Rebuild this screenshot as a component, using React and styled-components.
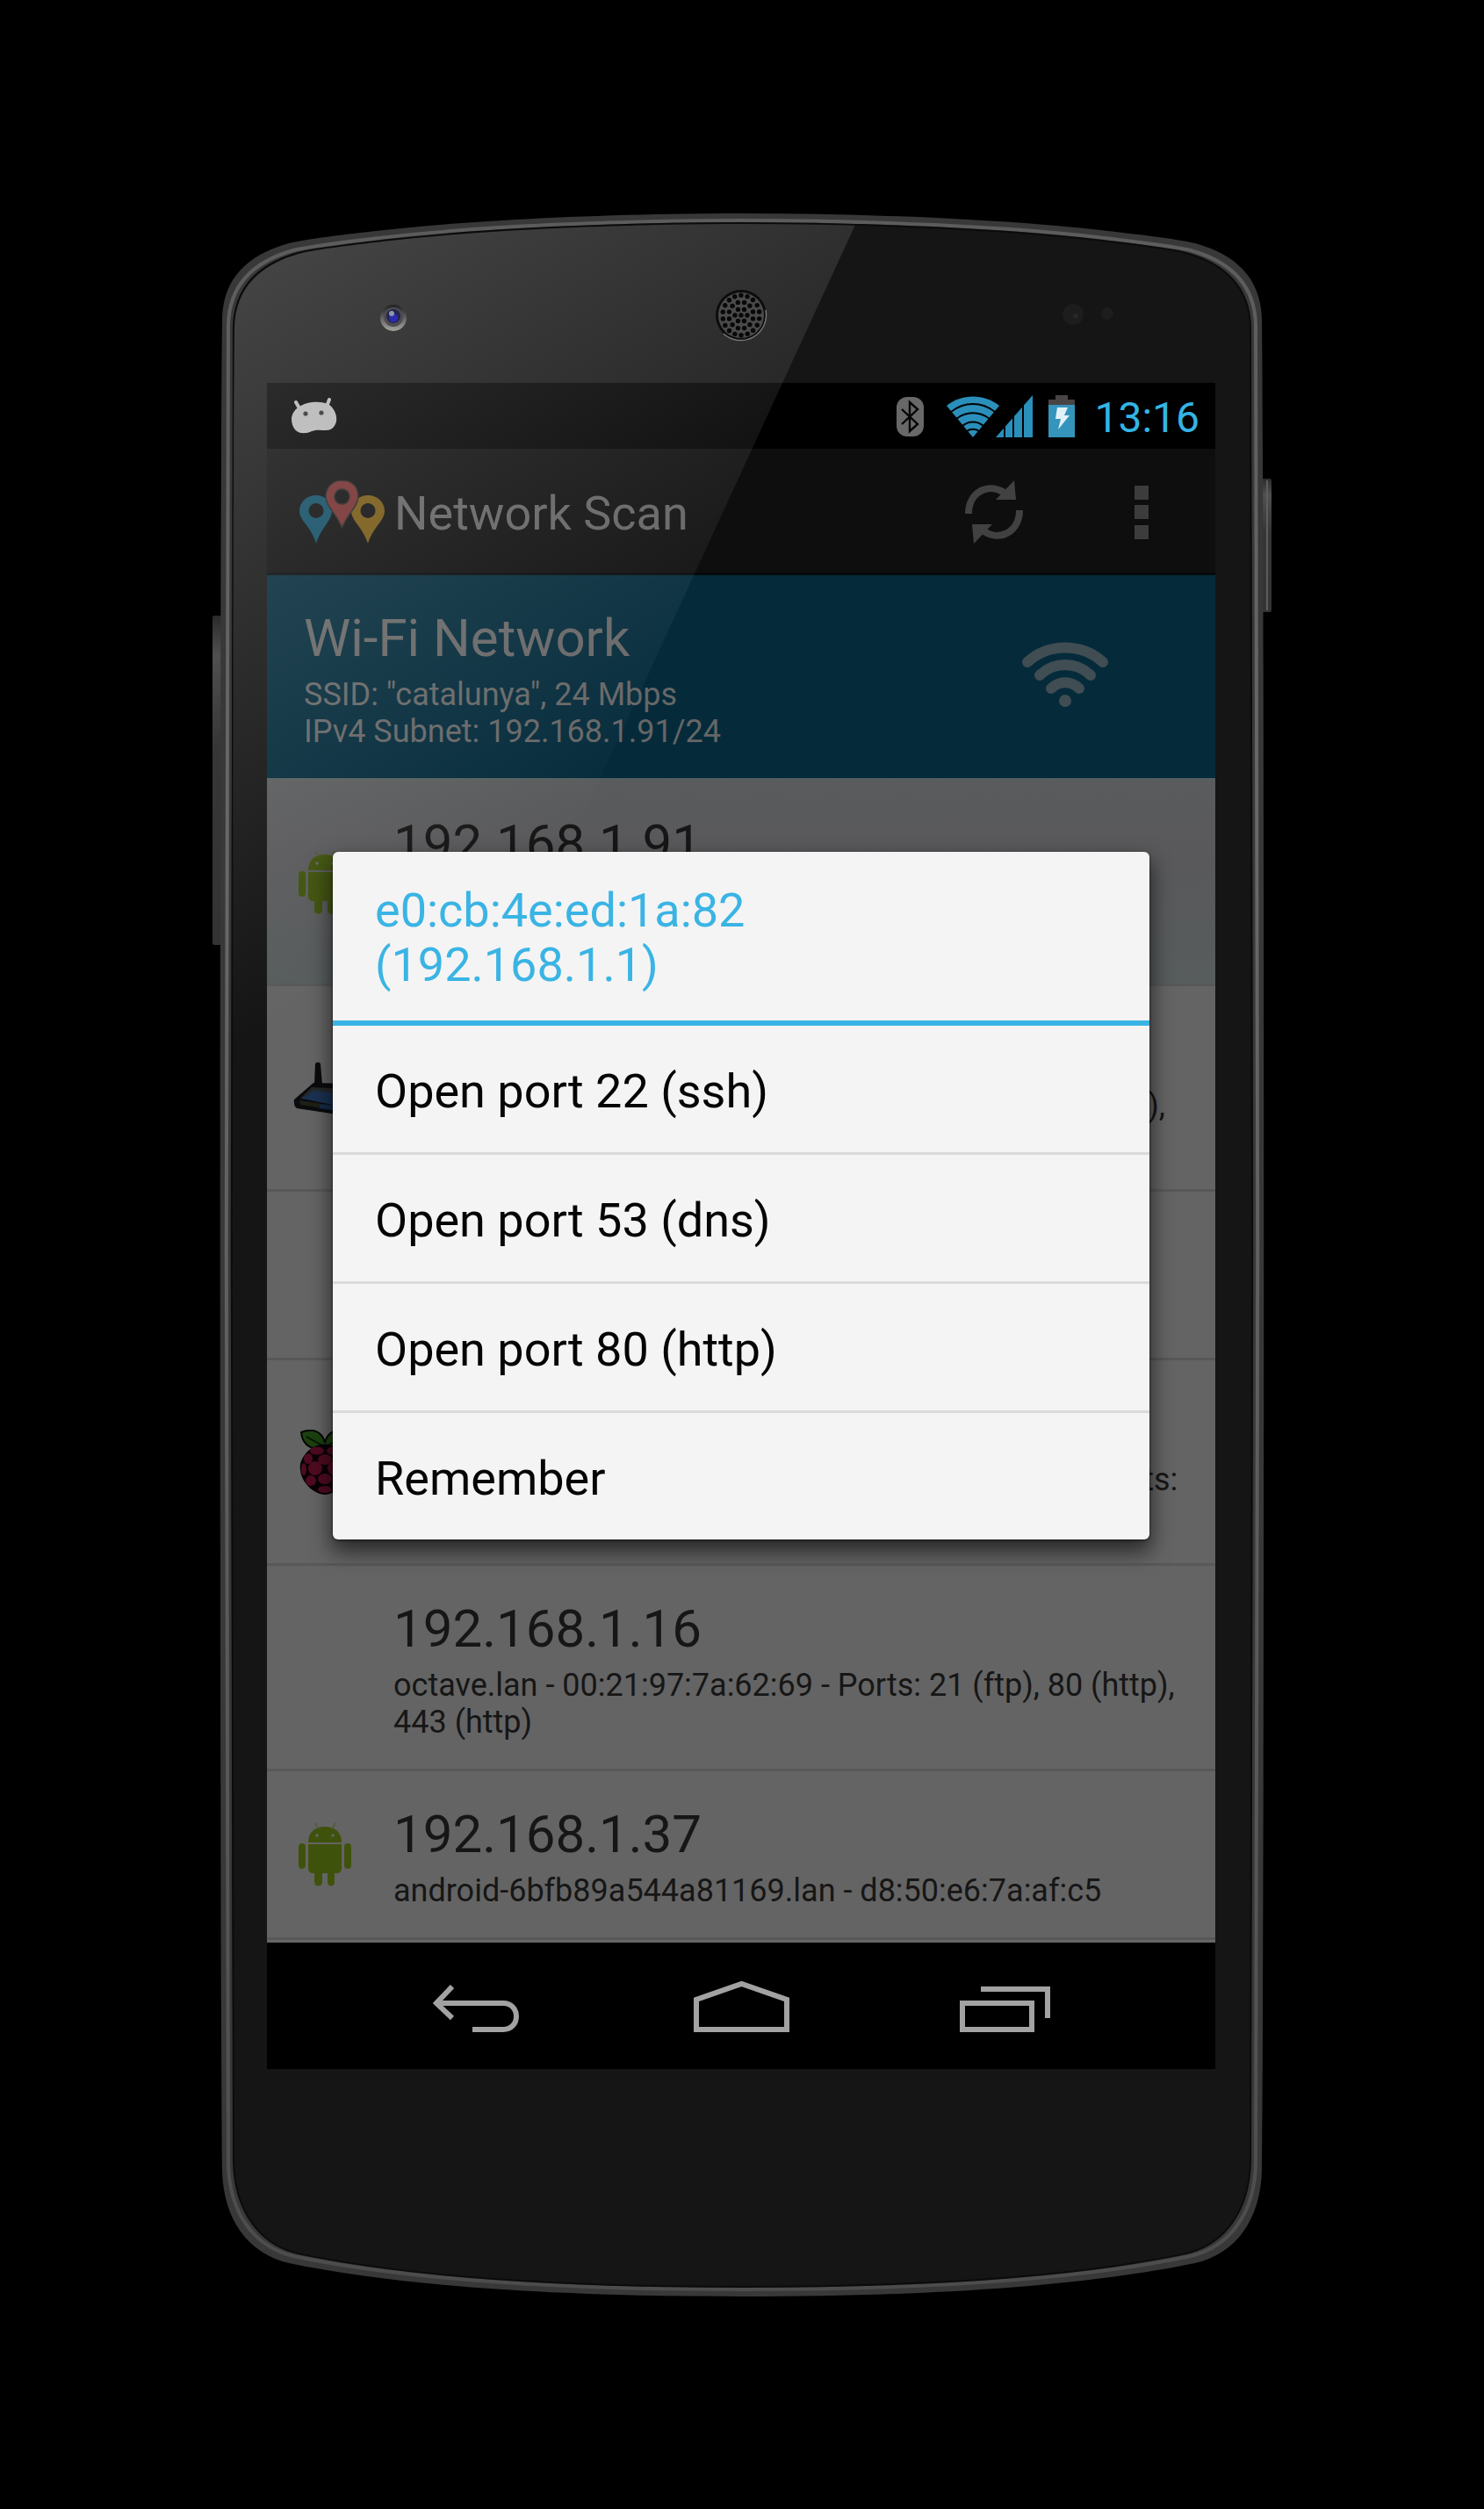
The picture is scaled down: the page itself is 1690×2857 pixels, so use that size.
import React from "react";
import styled, { createGlobalStyle } from "styled-components";

const GlobalStyle = createGlobalStyle`
  *, *::before, *::after { box-sizing: border-box; }
  body { margin: 0; background: #000; }
  h1, h2, h3, p, ul { margin: 0; padding: 0; font-weight: 400; }
  ul { list-style: none; }
  button { margin: 0; padding: 0; border: 0; background: none; font: inherit; color: inherit; text-align: left; cursor: pointer; }
  svg { display: block; flex: none; }
`;

const Page = styled.main`
  min-height: 100vh;
  display: flex;
  justify-content: center;
  align-items: flex-start;
  padding: 243px 0 0;
  background: #000;
  font-family: Roboto, "Liberation Sans", sans-serif;
`;

const Phone = styled.div`
  position: relative;
  width: 100%;
  max-width: 1206px;
  padding: 193px 64px 259px 62px;
`;

const FrameArt = styled.svg`
  position: absolute;
  inset: 0;
  width: 100%;
  height: 100%;
  pointer-events: none;
`;

const Screen = styled.div`
  position: relative;
  display: flex;
  flex-direction: column;
  background: #000;
`;

const StatusBar = styled.header`
  height: 75px;
  display: flex;
  align-items: center;
  justify-content: space-between;
  padding: 0 18px 0 28px;
  background: #000;
`;

const StatusIcons = styled.div`
  display: flex;
  align-items: center;
  gap: 18px;
`;

const Clock = styled.time`
  padding-top: 4px;
  font-size: 48px;
  line-height: 56px;
  color: #33b5e5;
`;

const AppArea = styled.div`
  position: relative;
  display: flex;
  flex-direction: column;
`;

const ActionBar = styled.div`
  height: 144px;
  display: flex;
  align-items: center;
  gap: 11px;
  padding-left: 37px;
  background: #0e0e0e;
  box-shadow: inset 0 -3px 0 #06090b;
`;

const AppTitle = styled.h1`
  flex: 1;
  padding-top: 4px;
  font-size: 54px;
  line-height: 64px;
  color: #626262;
`;

const Actions = styled.div`
  display: flex;
`;

const IconButton = styled.button`
  display: flex;
  align-items: center;
  justify-content: center;
  width: ${(p) => p.$width}px;
  height: 144px;
`;

const NetworkHeader = styled.section`
  display: flex;
  align-items: center;
  justify-content: space-between;
  padding: 37px 122px 32px 42px;
  background: #052b3b;
  color: #666;
`;

const HeadLine = styled.h2`
  font-size: 60px;
  line-height: 70px;
  margin-bottom: 8px;
`;

const Detail = styled.p`
  font-size: 36px;
  line-height: 42px;
`;

const HostList = styled.ul`
  border-top: 3px solid #575e5e;
  border-bottom: 3px solid #666;
  color: #161616;
`;

const HostRow = styled.li`
  display: flex;
  align-items: center;
  min-height: ${(p) => (p.$tall ? 234 : 192)}px;
  background: ${(p) => (p.$active ? "linear-gradient(#5a5b5c, #59595b 40%, #575c5d)" : "#646464")};
  border-bottom: 3px solid #585858;
`;

const HostIcon = styled.div`
  flex: none;
  width: 132px;
  display: flex;
  justify-content: center;
`;

const HostText = styled.div`
  flex: 1;
  align-self: flex-start;
  padding: 37px 36px 32px 12px;
`;

const DialogLayer = styled.div`
  position: absolute;
  inset: 0;
  display: flex;
  align-items: center;
  justify-content: center;
`;

const Dialog = styled.div`
  width: 100%;
  max-width: 930px;
  border-radius: 6px;
  background: #f4f4f4;
  box-shadow: 0 12px 24px 2px rgba(0, 0, 0, 0.6), 0 1px 3px rgba(0, 0, 0, 0.6);
  font-size: 54px;
`;

const DialogTitle = styled.h2`
  padding: 36px 48px 32px;
  font-size: 54px;
  line-height: 62px;
  color: #3ab4e4;
  border-bottom: 6px solid #3ab4e4;
`;

const MenuItem = styled.li`
  & + & { border-top: 3px solid #dadada; }
`;

const MenuButton = styled.button`
  display: block;
  width: 100%;
  height: 144px;
  padding: 4px 48px 0;
  color: #050505;
`;

const NavBar = styled.nav`
  height: 144px;
  display: flex;
  justify-content: center;
  background: #000;
`;

const BODY =
  "M845 243 C700 243 540 250 428 263 C385 268 350 272 329 277 C285 289 254 315 253 363 C250 600 250 2200 253 2470 C254 2530 285 2567 329 2577 C450 2602 620 2615 845 2615 C1070 2615 1240 2602 1361 2577 C1405 2567 1436 2530 1437 2470 C1440 2200 1440 600 1437 363 C1436 315 1405 289 1361 277 C1340 272 1305 268 1262 263 C1150 250 990 243 845 243 Z";

const inset = (dx, dy) =>
  `translate(845 1429) scale(${1 - dx / 594} ${1 - dy / 1186}) translate(-845 -1429)`;

function SpeakerGrille() {
  const holes = [[0, 0]];
  [[6, 7], [12, 14], [18, 21]].forEach(([n, r], ring) => {
    for (let i = 0; i < n; i += 1) {
      const a = (i / n) * Math.PI * 2 + ring * 0.26;
      holes.push([r * Math.cos(a), r * Math.sin(a) * 1.08]);
    }
  });
  return (
    <g transform="translate(844 359)">
      <circle r="29" fill="#0c0c0c" />
      <path d="M-20 21 A29 29 0 0 0 28 -6" fill="none" stroke="#777" strokeWidth="1.5" />
      <circle r="26" fill="#4a4a4a" />
      {holes.map(([x, y], i) => (
        <circle key={i} cx={x} cy={y} r="2.7" fill="#080808" />
      ))}
    </g>
  );
}

function PhoneFrame() {
  return (
    <FrameArt viewBox="242 243 1206 2372" preserveAspectRatio="none" aria-hidden="true">
      <defs>
        <linearGradient id="rim" x1="0" y1="0" x2="0" y2="1">
          <stop offset="0" stopColor="#5c5c5c" />
          <stop offset="0.3" stopColor="#68686b" />
          <stop offset="0.8" stopColor="#565656" />
          <stop offset="1" stopColor="#4c4c4c" />
        </linearGradient>
        <linearGradient id="side" x1="0" y1="0" x2="0" y2="1">
          <stop offset="0" stopColor="#2a2a2a" />
          <stop offset="0.12" stopColor="#505050" />
          <stop offset="0.4" stopColor="#363636" />
          <stop offset="1" stopColor="#333" />
        </linearGradient>
      </defs>
      <rect x="242" y="701" width="14" height="375" rx="2" fill="url(#side)" />
      <rect x="1434" y="545" width="14" height="152" rx="2" fill="url(#side)" />
      <rect x="1442" y="547" width="2" height="148" fill="#5d5d5d" />
      <path d={BODY} fill="#383838" />
      <path d={BODY} transform={inset(7, 8)} fill="none" stroke="url(#rim)" strokeWidth="4" />
      <path d={BODY} transform={inset(13, 11)} fill="#151515" stroke="#0b0b0b" strokeWidth="2" />
      <circle cx="1222" cy="358" r="12" fill="#1d1d1d" />
      <circle cx="1225" cy="360" r="3" fill="#272727" />
      <circle cx="1261" cy="357" r="7" fill="#1d1d1d" />
    </FrameArt>
  );
}

function Gloss() {
  return (
    <FrameArt viewBox="242 243 1206 2372" preserveAspectRatio="none" aria-hidden="true">
      <defs>
        <linearGradient id="shine" gradientUnits="userSpaceOnUse" x1="300" y1="300" x2="693" y2="929">
          <stop offset="0" stopColor="#fff" stopOpacity="0.2" />
          <stop offset="1" stopColor="#fff" stopOpacity="0" />
        </linearGradient>
        <linearGradient id="lens" x1="0" y1="0" x2="0" y2="1">
          <stop offset="0" stopColor="#202020" />
          <stop offset="1" stopColor="#a4a4a0" />
        </linearGradient>
        <clipPath id="glass">
          <path d={BODY} transform={inset(14, 12)} />
        </clipPath>
      </defs>
      <g clipPath="url(#glass)">
        <path d="M242 243 H980 L645 970 H379 V1300 H242 Z" fill="url(#shine)" />
      </g>
      <SpeakerGrille />
      <circle cx="448" cy="362" r="15" fill="url(#lens)" />
      <circle cx="448" cy="361" r="11" fill="#4c4c52" />
      <circle cx="448" cy="360" r="8" fill="#25254a" />
      <circle cx="448" cy="362" r="5" fill="#2c2bb0" />
      <circle cx="446" cy="357" r="3" fill="#8d96ae" />
    </FrameArt>
  );
}

const NoticeIcon = () => (
  <svg width="52" height="41" viewBox="0 0 52 41" aria-hidden="true">
    <path d="M5 5 L9 12 M43 2 L40 10" stroke="#b4b4b4" strokeWidth="4" strokeLinecap="round" />
    <path d="M9 10 C18 4 34 3 43 8 C50 13 52 22 51 27 C49 34 45 37 39 37 C32 37 29 36 23 38 C17 41 10 41 6 38 C1 34 0 28 0 23 C1 17 4 13 9 10 Z" fill="#b4b4b4" />
    <circle cx="16" cy="18" r="2.6" fill="#2b2b2b" />
    <circle cx="34" cy="17" r="2.6" fill="#2b2b2b" />
  </svg>
);

const BluetoothIcon = () => (
  <svg width="39" height="48" viewBox="0 0 39 48" aria-label="Bluetooth" role="img">
    <rect x="0" y="2" width="31" height="45" rx="12" fill="#686868" />
    <path d="M6 16 L24 33 L15 41 V8 L24 16 L6 33" fill="none" stroke="#050505" strokeWidth="2.4" />
  </svg>
);

const SignalIcon = () => (
  <svg width="98" height="48" viewBox="0 0 98 48" aria-label="Signal strength" role="img">
    <path d="M0 12 C17 -2 43 -2 60 12 L30 48 Z" fill="#2a8fba" />
    <g fill="none" stroke="#000" strokeWidth="2">
      <path d="M5 19 C20 7 40 7 55 19" />
      <path d="M11 27 C22 18 38 18 49 27" />
      <path d="M18 35 C25 29 35 29 42 35" />
      <path d="M23 41 C27 38 33 38 37 41" />
    </g>
    <path d="M56 48 L98 0 V48 Z" fill="#2a8fba" />
    <path d="M66 30 V48 M76 20 V48 M87 8 V48" stroke="#000" strokeWidth="2" />
  </svg>
);

const BatteryIcon = () => (
  <svg width="34" height="48" viewBox="0 0 34 48" aria-label="Battery charging" role="img">
    <path d="M8 0 H22 V5 H30 V12 H0 V5 H8 Z" fill="#484444" />
    <rect y="11" width="30" height="37" fill="#3494bb" />
    <path d="M10 14 H22 L18 23 H24 L11 39 L14 27 H8 Z" fill="#e2f1f7" />
  </svg>
);

const LogoIcon = () => (
  <svg width="97" height="72" viewBox="0 0 97 72" aria-hidden="true">
    <path fillRule="evenodd" fill="#0f4b62" d="M19 17 C30 17 37 25 37 35 C37 46 25 53 19 72 C14 53 0 46 0 35 C0 25 8 17 19 17 Z M19 26 a8.500 8.500 0 1 0 .01 0 Z" />
    <path fillRule="evenodd" fill="#745612" d="M78 17 C89 17 97 25 97 35 C97 46 84 53 78 72 C72 53 59 46 59 35 C59 25 67 17 78 17 Z M78 26 a8.500 8.500 0 1 0 .01 0 Z" />
    <path fillRule="evenodd" fill="#722c2d" stroke="#242424" strokeWidth="1.500" d="M48.500 0 C60 0 67 8 67 18 C67 30 55 37 48.500 54 C42 37 30 30 30 18 C30 8 38 0 48.500 0 Z M48.500 10 a8.500 8.500 0 1 0 .01 0 Z" />
  </svg>
);

const RefreshIcon = () => (
  <svg width="68" height="72" viewBox="0 0 68 72" aria-hidden="true">
    <path d="M5 38 C5 14 27 1 47 15" fill="none" stroke="#414141" strokeWidth="8" />
    <path d="M57 0 L59 22 H36 Z" fill="#414141" />
    <path d="M63 34 C63 58 41 71 21 57" fill="none" stroke="#414141" strokeWidth="8" />
    <path d="M11 72 L9 50 H32 Z" fill="#414141" />
  </svg>
);

const MoreIcon = () => (
  <svg width="16" height="61" viewBox="0 0 16 61" aria-hidden="true">
    <path d="M0 0 H16 V16 H0 Z M0 22 H16 V38 H0 Z M0 45 H16 V61 H0 Z" fill="#3c3c3c" />
  </svg>
);

const WifiIcon = () => (
  <svg width="98" height="84" viewBox="0 0 98 84" fill="none" stroke="#404d53" strokeWidth="12" strokeLinecap="round" aria-hidden="true">
    <path d="M6 23 C30 1 68 1 92 23" />
    <path d="M20 38 C36 22 62 22 78 38" />
    <path d="M33 53 C42 44 56 44 65 53" />
    <circle cx="49" cy="67" r="7" fill="#404d53" stroke="none" />
  </svg>
);

const AndroidIcon = () => (
  <svg width="60" height="72" viewBox="0 0 60 72" fill="#3f520c" aria-hidden="true">
    <path d="M11 22 C11 10 19 4 30 4 C41 4 49 10 49 22 Z" />
    <path d="M19 0 L23 7 M42 0 L38 7" stroke="#4d5a2b" strokeWidth="1.500" />
    <path d="M11 24 H49 V51 C49 55 47 57 44 57 H41 V67 C41 73 33 73 33 67 V57 H27 V67 C27 73 18 73 18 67 V57 H16 C13 57 11 55 11 51 Z" />
    <rect x="0" y="23" width="8" height="29" rx="4" />
    <rect x="52" y="23" width="8" height="29" rx="4" />
    <circle cx="21" cy="14" r="1.800" fill="#646464" />
    <circle cx="39" cy="14" r="1.800" fill="#646464" />
  </svg>
);

const RouterIcon = () => (
  <svg width="72" height="60" viewBox="0 0 72 60" aria-hidden="true">
    <path d="M25 2 Q28 -1 31 2 L33 26 H24 Z M52 2 Q55 -1 58 2 L60 26 H51 Z" fill="#0b0b0b" />
    <path d="M23 24 L60 25 L72 44 Q73 52 68 55 L50 60 L4 53 Q0 50 1 43 Z" fill="#0a0b0e" />
    <path d="M21 29 L56 31 L66 45 L8 42 Z" fill="#25282b" />
    <path d="M24 33 L56 37 L66 47 L50 50 L10 42 Z" fill="#1a3152" />
    <path d="M7 44 L40 49 V54 L8 49 Z" fill="#1d2016" />
    <path d="M30 49 L66 48 L50 56 L30 53 Z" fill="#142b49" />
  </svg>
);

const RaspberryIcon = () => (
  <svg width="58" height="74" viewBox="0 0 58 74" aria-hidden="true">
    <path d="M2 3 C14 -2 26 1 29 15 C32 1 44 -2 56 3 C55 15 47 21 40 21 H18 C11 21 3 15 2 3 Z" fill="#1c4010" stroke="#050505" strokeWidth="2" />
    <path d="M8 8 L26 18 M50 8 L32 18" stroke="#071505" strokeWidth="2" />
    <path d="M14 21 C22 15 36 15 44 21 C52 26 59 37 57 46 C56 60 41 74 29 74 C17 74 2 60 1 46 C-1 37 6 26 14 21 Z" fill="#080206" />
    <g fill="#4f0b20">
      <ellipse cx="20" cy="24" rx="8" ry="4.500" /><ellipse cx="39" cy="24" rx="8" ry="4.500" />
      <ellipse cx="10" cy="33" rx="5" ry="6" /><ellipse cx="48" cy="33" rx="5" ry="6" />
      <ellipse cx="29" cy="34" rx="8" ry="6" /><ellipse cx="18" cy="44" rx="8" ry="8" />
      <ellipse cx="40" cy="44" rx="8" ry="8" /><ellipse cx="5" cy="45" rx="3" ry="7" />
      <ellipse cx="53" cy="45" rx="3" ry="7" /><ellipse cx="29" cy="56" rx="8" ry="6" />
      <ellipse cx="13" cy="58" rx="6" ry="6" /><ellipse cx="45" cy="58" rx="6" ry="6" />
      <ellipse cx="29" cy="68" rx="8" ry="4" />
    </g>
  </svg>
);

const BackIcon = () => (
  <svg width="101" height="60" viewBox="0 0 101 60" fill="none" stroke="#a2a2a2" strokeWidth="6" aria-hidden="true">
    <path d="M22 8 L4 27 L22 44 M5 27 H80 C100 27 100 57 80 57 H45" />
  </svg>
);

const HomeIcon = () => (
  <svg width="109" height="60" viewBox="0 0 109 60" fill="none" stroke="#a2a2a2" strokeWidth="6" aria-hidden="true">
    <path d="M3 57 V23 L54.500 5 L106 23 V57 Z" />
  </svg>
);

const RecentIcon = () => (
  <svg width="104" height="60" viewBox="0 0 104 60" fill="none" stroke="#a2a2a2" strokeWidth="6" aria-hidden="true">
    <path d="M3 27 H82 V57 H3 Z M24 11 H100 V44" />
  </svg>
);

const hosts = [
  { ip: "192.168.1.91", details: [], tall: true, icon: <AndroidIcon />, active: true },
  { ip: "192.168.1.1", details: ["router.lan - e0:cb:4e:ed:1a:82 - Ports: 22 (ssh), 53 (dns),"], tall: true, icon: <RouterIcon /> },
  { ip: "192.168.1.10", details: [] },
  { ip: "192.168.1.12", details: ["raspberry1.lan - b8:27:eb:42:1c:07 - Raspberry Pi - Ports:"], tall: true, icon: <RaspberryIcon /> },
  { ip: "192.168.1.16", details: ["octave.lan - 00:21:97:7a:62:69 - Ports: 21 (ftp), 80 (http),", "443 (http)"], tall: true },
  { ip: "192.168.1.37", details: ["android-6bfb89a544a81169.lan - d8:50:e6:7a:af:c5"], icon: <AndroidIcon /> },
];

const choices = ["Open port 22 (ssh)", "Open port 53 (dns)", "Open port 80 (http)", "Remember"];

export default function App() {
  return (
    <Page>
      <GlobalStyle />
      <Phone>
        <PhoneFrame />
        <Screen>
          <StatusBar>
            <NoticeIcon />
            <StatusIcons>
              <BluetoothIcon />
              <SignalIcon />
              <BatteryIcon />
              <Clock>13:16</Clock>
            </StatusIcons>
          </StatusBar>
          <AppArea>
            <ActionBar>
              <LogoIcon />
              <AppTitle>Network Scan</AppTitle>
              <Actions>
                <IconButton $width={168} aria-label="Refresh"><RefreshIcon /></IconButton>
                <IconButton $width={168} aria-label="More options"><MoreIcon /></IconButton>
              </Actions>
            </ActionBar>
            <NetworkHeader>
              <div>
                <HeadLine>Wi-Fi Network</HeadLine>
                <Detail>SSID: "catalunya", 24 Mbps</Detail>
                <Detail>IPv4 Subnet: 192.168.1.91/24</Detail>
              </div>
              <WifiIcon />
            </NetworkHeader>
            <HostList>
              {hosts.map((host) => (
                <HostRow key={host.ip} $active={host.active} $tall={host.tall}>
                  <HostIcon>{host.icon}</HostIcon>
                  <HostText>
                    <HeadLine as="h3">{host.ip}</HeadLine>
                    {host.details.map((line) => (
                      <Detail key={line}>{line}</Detail>
                    ))}
                  </HostText>
                </HostRow>
              ))}
            </HostList>
            <DialogLayer>
              <Dialog role="dialog" aria-labelledby="dialog-title">
                <DialogTitle id="dialog-title">
                  e0:cb:4e:ed:1a:82
                  <br />
                  (192.168.1.1)
                </DialogTitle>
                <ul>
                  {choices.map((choice) => (
                    <MenuItem key={choice}>
                      <MenuButton>{choice}</MenuButton>
                    </MenuItem>
                  ))}
                </ul>
              </Dialog>
            </DialogLayer>
          </AppArea>
          <NavBar>
            <IconButton $width={301} aria-label="Back"><BackIcon /></IconButton>
            <IconButton $width={301} aria-label="Home"><HomeIcon /></IconButton>
            <IconButton $width={301} aria-label="Recent apps"><RecentIcon /></IconButton>
          </NavBar>
        </Screen>
        <Gloss />
      </Phone>
    </Page>
  );
}
